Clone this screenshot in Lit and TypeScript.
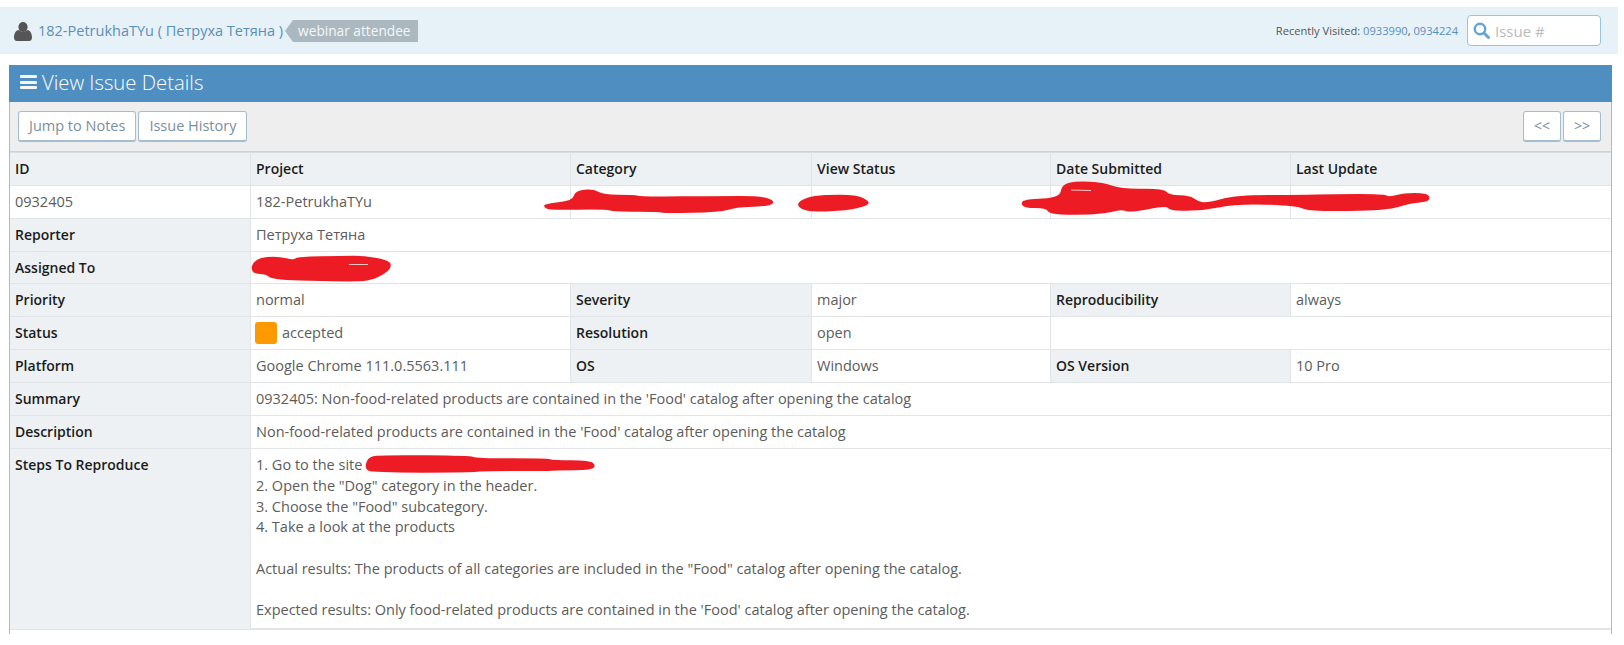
import { LitElement, html, css, svg } from "lit";
import { customElement } from "lit/decorators.js";

// turn a list of x,y points into a closed path with rounded corners
const smooth = (pts: number[][]) => {
  const mid = (a: number[], b: number[]) => `${(a[0] + b[0]) / 2} ${(a[1] + b[1]) / 2}`;
  let d = `M${mid(pts[pts.length - 1], pts[0])}`;
  pts.forEach((p, i) => {
    d += `Q${p[0]} ${p[1]} ${mid(p, pts[(i + 1) % pts.length])}`;
  });
  return d + "Z";
};

// red marker strokes from the reference, in 3x crop coordinates
const scribbles = [
  {
    at: "translate(530 180) scale(.3333)",
    shapes: [
      [[42, 72], [128, 62], [135, 32], [190, 26], [220, 44], [310, 44], [340, 50], [570, 48], [690, 48], [730, 60], [730, 74], [690, 80], [620, 82], [570, 97], [400, 100], [390, 95], [250, 95], [230, 88], [60, 90], [42, 82]],
      [[800, 70], [830, 52], [880, 44], [980, 44], [1016, 62], [1016, 76], [950, 92], [850, 96], [812, 87]],
    ],
  },
  {
    at: "translate(1010 175) scale(.3333)",
    shapes: [
      [[32, 85], [45, 73], [150, 68], [155, 28], [200, 18], [280, 22], [335, 42], [460, 40], [478, 60], [540, 62], [562, 78], [590, 84], [680, 60], [870, 60], [970, 57], [1120, 57], [1140, 66], [1180, 54], [1250, 54], [1262, 70], [1248, 82], [1200, 84], [1135, 106], [900, 110], [860, 92], [680, 86], [580, 107], [480, 107], [470, 92], [360, 113], [335, 103], [300, 113], [230, 120], [120, 118], [108, 99], [45, 99]],
    ],
  },
  {
    at: "translate(230 240) scale(.3333)",
    shapes: [
      [[62, 82], [78, 58], [110, 50], [150, 50], [190, 60], [205, 50], [340, 48], [400, 47], [472, 60], [486, 75], [472, 97], [420, 123], [350, 125], [128, 120], [108, 102], [72, 102]],
    ],
  },
  {
    at: "translate(340 445) scale(.3333)",
    shapes: [
      [[77, 55], [88, 35], [130, 30], [390, 32], [410, 40], [620, 40], [640, 45], [750, 47], [767, 60], [757, 75], [650, 76], [620, 78], [420, 78], [400, 83], [95, 83], [77, 72]],
    ],
  },
];

@customElement("app-root")
export class AppRoot extends LitElement {
  static styles = css`
    :host {
      display: block;
      position: relative;
      height: 645px;
      overflow: hidden;
      background: #fff;
      font-family: "Open Sans", "Noto Sans", sans-serif;
      font-size: 14.5px;
      color: #5c5c5c;
    }
    a {
      color: #5a8fb8;
      text-decoration: none;
    }
    .topbar {
      margin: 7px 6px 0 0;
      height: 47px;
      background: #e7f1f8;
      display: flex;
      align-items: center;
      padding: 0 17px 0 14px;
      box-sizing: border-box;
    }
    .user {
      width: 18px;
      height: 19px;
      margin: 2px 6px 0 0;
      fill: #555;
    }
    .name {
      font-size: 14.5px;
      white-space: nowrap;
    }
    .badge {
      position: relative;
      margin-left: 10px;
      height: 22px;
      line-height: 22px;
      padding: 0 7px 0 5px;
      background: #abb8c0;
      color: #f4f7f9;
      font-size: 13.7px;
    }
    .badge::before {
      content: "";
      position: absolute;
      left: -8px;
      top: 0;
      border-style: solid;
      border-width: 11px 8px 11px 0;
      border-color: transparent #abb8c0 transparent transparent;
    }
    .recent {
      margin-left: auto;
      font-size: 11.15px;
      color: #555;
      white-space: nowrap;
    }
    .search {
      margin-left: 9px;
      width: 134px;
      height: 31px;
      box-sizing: border-box;
      border: 1px solid #97c4e2;
      border-radius: 4px;
      background: #fff;
      display: flex;
      align-items: center;
      gap: 5px;
      padding-left: 5px;
      font-size: 15px;
      color: #bbb;
    }
    .search svg {
      width: 17px;
      height: 17px;
      flex: none;
    }
    .widget {
      margin: 11px 12px 0 9px;
      height: 569px;
      border-left: 1px solid #9dc0da;
      border-right: 1px solid #9dc0da;
    }
    .head {
      margin: 0 -1px;
      height: 37px;
      padding: 0 0 3px 11px;
      box-sizing: border-box;
      background: #4f8ec0;
      color: #fff;
      display: flex;
      align-items: center;
      gap: 5px;
      font-size: 20.3px;
      font-weight: 300;
    }
    .bars {
      width: 17px;
      height: 14px;
      display: flex;
      flex-direction: column;
      justify-content: space-between;
    }
    .bars span {
      height: 3px;
      background: #f2f7fb;
      border-radius: 1px;
    }
    .toolbar {
      height: 50px;
      box-sizing: border-box;
      background: #eee;
      border-bottom: 1px solid #d0d3d5;
      display: flex;
      align-items: flex-start;
      gap: 2px;
      padding: 9px 10px 0 8px;
    }
    .btn {
      height: 31px;
      box-sizing: border-box;
      padding: 0 10px;
      line-height: 28px;
      background: #fff;
      border: 1px solid #a3bed2;
      border-bottom-width: 2px;
      border-radius: 3px;
      color: #78909f;
      white-space: nowrap;
    }
    .btn.nav {
      width: 38px;
      padding: 0;
      font-size: 14px;
      text-align: center;
    }
    .spacer {
      flex: 1;
    }
    table {
      width: 1601px;
      table-layout: fixed;
      border-collapse: collapse;
      border-top: 1px solid #d9dcde;
    }
    td,
    th {
      height: 33px;
      box-sizing: border-box;
      padding: 0 5.5px 1px;
      border: 1px solid #e2e5e7;
      border-top: 0;
      text-align: left;
      font-weight: 400;
      vertical-align: middle;
      white-space: nowrap;
    }
    tr.short td,
    tr.short th {
      height: 32px;
    }
    td:first-child,
    th:first-child {
      border-left: 0;
      padding-left: 5px;
    }
    td:last-child,
    th:last-child {
      border-right: 0;
    }
    th,
    tr.head-row td {
      background: #edf1f3;
      color: #1c1c1c;
      font-size: 14px;
      font-weight: 600;
    }
    .status {
      display: flex;
      align-items: center;
      gap: 5px;
      margin-left: -1px;
    }
    .swatch {
      width: 22px;
      height: 22px;
      border-radius: 3px;
      background: #ff9900;
    }
    tr.steps th {
      vertical-align: top;
      padding-top: 5px;
      line-height: 21px;
    }
    tr.steps td {
      padding-top: 6px;
      padding-bottom: 7px;
      border-bottom-width: 2px;
      line-height: 20.75px;
      vertical-align: top;
    }
    .marks {
      position: absolute;
      left: 0;
      top: 0;
      pointer-events: none;
    }
    .marks path {
      fill: #ed1c24;
    }
    .marks line {
      stroke: #fff;
      stroke-width: 1;
      stroke-opacity: 0.75;
    }
  `;

  render() {
    return html`
      <div class="topbar">
        <svg class="user" viewBox="0 0 18 19">
          <ellipse cx="9" cy="5" rx="4.6" ry="5"></ellipse>
          <path d="M0 15.5C0 11.5 2 8 5 8c1 1 2.5 1.6 4 1.6S12 9 13 8c3 0 5 3.5 5 7.5C18 18 16.6 19 15 19H3C1.4 19 0 18 0 15.5z"></path>
        </svg>
        <a class="name" href="#">182-PetrukhaTYu ( Петруха Тетяна )</a>
        <span class="badge">webinar attendee</span>
        <span class="recent">Recently Visited: <a href="#">0933990</a>, <a href="#">0934224</a></span>
        <div class="search">
          <svg viewBox="0 0 17 17" fill="none" stroke="#65a5d3">
            <circle cx="7" cy="7" r="5.2" stroke-width="2.4"></circle>
            <path d="M11 11l4.5 4.5" stroke-width="3" stroke-linecap="round"></path>
          </svg>
          Issue #
        </div>
      </div>

      <div class="widget">
        <div class="head">
          <div class="bars"><span></span><span></span><span></span></div>
          View Issue Details
        </div>
        <div class="toolbar">
          <a class="btn" href="#">Jump to Notes</a>
          <a class="btn" href="#">Issue History</a>
          <span class="spacer"></span>
          <a class="btn nav" href="#">&lt;&lt;</a>
          <a class="btn nav" href="#">&gt;&gt;</a>
        </div>
        <table>
          <colgroup>
            <col style="width:240px" />
            <col style="width:320px" />
            <col style="width:241px" />
            <col style="width:239px" />
            <col style="width:240px" />
            <col style="width:321px" />
          </colgroup>
          <tr class="head-row">
            <td>ID</td>
            <td>Project</td>
            <td>Category</td>
            <td>View Status</td>
            <td>Date Submitted</td>
            <td>Last Update</td>
          </tr>
          <tr>
            <td>0932405</td>
            <td>182-PetrukhaTYu</td>
            <td></td>
            <td></td>
            <td></td>
            <td></td>
          </tr>
          <tr>
            <th>Reporter</th>
            <td colspan="5">Петруха Тетяна</td>
          </tr>
          <tr class="short">
            <th>Assigned To</th>
            <td colspan="5"></td>
          </tr>
          <tr>
            <th>Priority</th>
            <td>normal</td>
            <th>Severity</th>
            <td>major</td>
            <th>Reproducibility</th>
            <td>always</td>
          </tr>
          <tr>
            <th>Status</th>
            <td><div class="status"><span class="swatch"></span>accepted</div></td>
            <th>Resolution</th>
            <td>open</td>
            <td colspan="2"></td>
          </tr>
          <tr>
            <th>Platform</th>
            <td>Google Chrome 111.0.5563.111</td>
            <th>OS</th>
            <td>Windows</td>
            <th>OS Version</th>
            <td>10 Pro</td>
          </tr>
          <tr>
            <th>Summary</th>
            <td colspan="5">0932405: Non-food-related products are contained in the 'Food' catalog after opening the catalog</td>
          </tr>
          <tr>
            <th>Description</th>
            <td colspan="5">Non-food-related products are contained in the 'Food' catalog after opening the catalog</td>
          </tr>
          <tr class="steps">
            <th>Steps To Reproduce</th>
            <td colspan="5">
              1. Go to the site<br />
              2. Open the "Dog" category in the header.<br />
              3. Choose the "Food" subcategory.<br />
              4. Take a look at the products<br />
              <br />
              Actual results: The products of all categories are included in the "Food" catalog after opening the catalog.<br />
              <br />
              Expected results: Only food-related products are contained in the 'Food' catalog after opening the catalog.
            </td>
          </tr>
        </table>
      </div>

      <svg class="marks" width="1624" height="645" viewBox="0 0 1624 645">
        ${scribbles.map(
          (s) => svg`<g transform=${s.at}>${s.shapes.map((p) => svg`<path d=${smooth(p)}></path>`)}</g>`
        )}
        <line x1="1071" y1="190" x2="1091" y2="190.5"></line>
        <line x1="349" y1="264.5" x2="368" y2="264.5"></line>
      </svg>
    `;
  }
}
